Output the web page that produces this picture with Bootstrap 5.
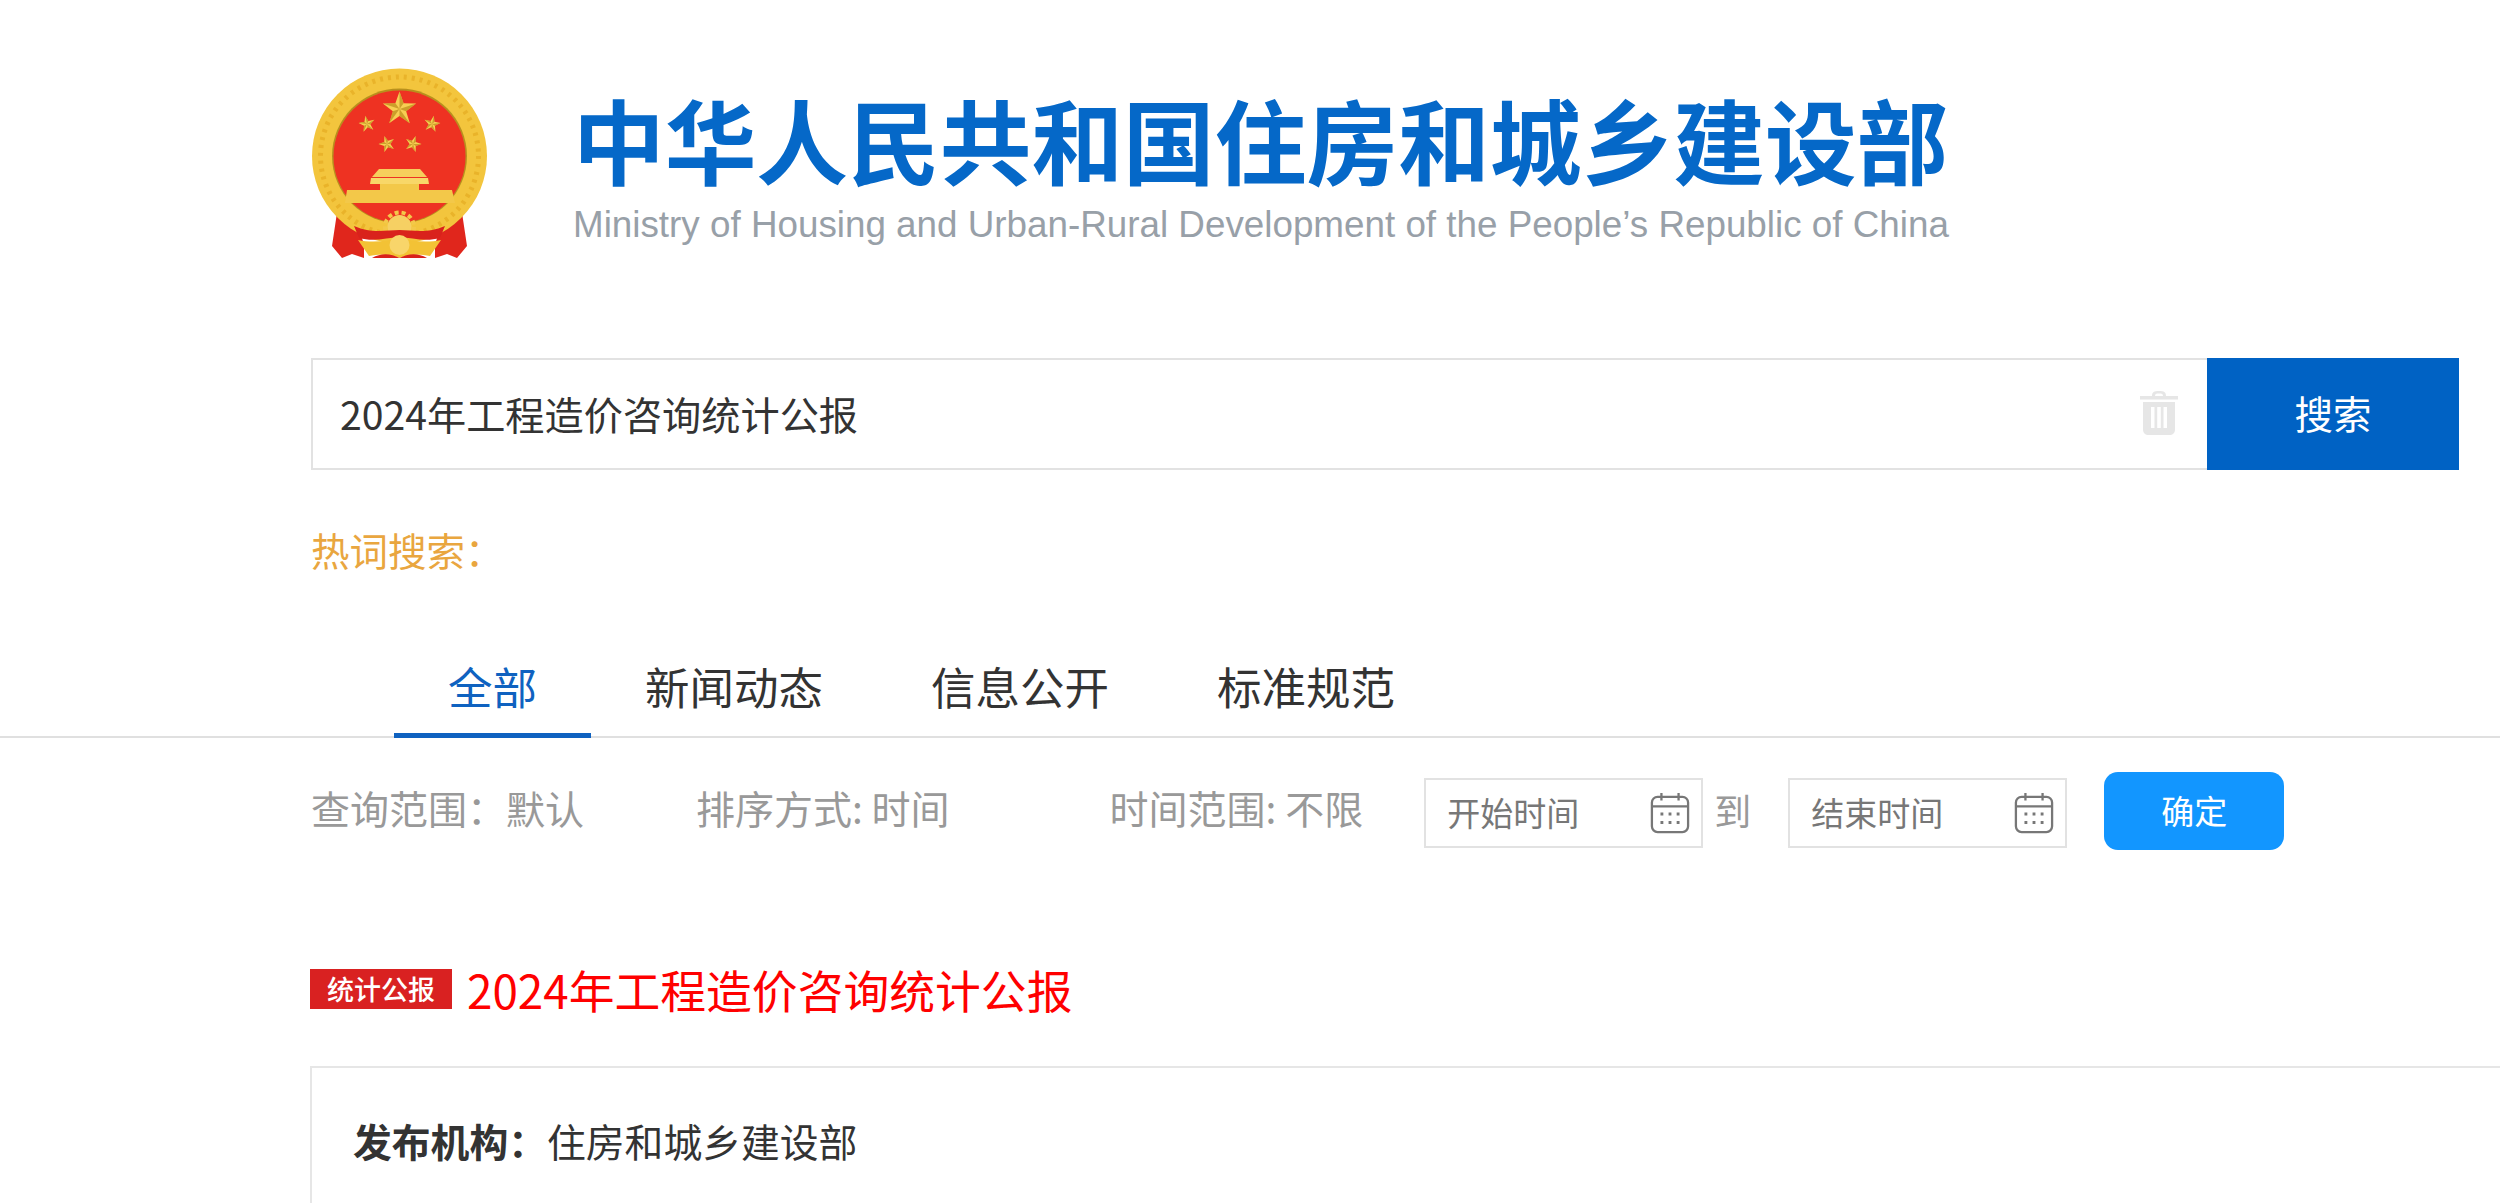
<!DOCTYPE html>
<html lang="zh-CN">
<head>
  <meta charset="UTF-8" />
  <meta name="viewport" content="width=device-width, initial-scale=1" />
  <title>中华人民共和国住房和城乡建设部</title>
  <link href="https://cdn.jsdelivr.net/npm/bootstrap@5.3.0/dist/css/bootstrap.min.css" rel="stylesheet" />
  <style>
    html, body { height: 100%; overflow: hidden; }
    body {
      background: #fff;
      color: #333;
      font-family: "Noto Sans CJK SC", "Liberation Sans", sans-serif;
      font-size: 38.5px;
    }
    .site-head { padding: 68px 0 0 312px; height: 358px; }
    .emblem { width: 176px; height: 192px; flex-shrink: 0; }
    .brand { margin: 17px 0 0 85px; }
    .brand-cn { font-size: 91.7px; font-weight: 700; line-height: 106px; color: #0568c8; white-space: nowrap; }
    .brand-en { font-family: "Liberation Sans", sans-serif; font-size: 36.8px; line-height: 40px; margin-top: 14px; color: #98a0a8; white-space: nowrap; }

    .search-wrap { margin-left: 311px; width: 2148px; height: 112px; }
    .search-field { border: 2px solid #e2e2e2; border-right: 0; background: #fff; }
    .search-input { border: 0; border-radius: 0; font-size: 39.2px; color: #333; padding: 0 0 3px 27px; height: 100%; box-shadow: none !important; }
    .trash { width: 42px; height: 46px; margin-right: 27px; margin-bottom: 3px; flex-shrink: 0; }
    .search-btn { width: 252px; border: 0; border-radius: 0; background: #0062c4; color: #fff; font-size: 38.5px; padding: 0 0 2px; }

    .hot-words { margin: 51px 0 0 311px; color: #e9a63f; line-height: 56px; height: 56px; }

    .tab-bar { margin-top: 69px; padding-left: 394px; height: 92px; border-bottom: 2px solid #e0e0e0; }
    .tab-item { color: #333; font-size: 44.5px; padding: 0 54px; height: 92px; line-height: 80px; text-decoration: none; }
    .tab-item.is-active { color: #0f62c0; border-bottom: 5px solid #0f62c0; }

    .filter-row { margin: 33px 0 0 311px; height: 80px; color: #999; }
    .filter-text { font-size: 39px; line-height: 56px; white-space: nowrap; margin-bottom: 9px; }
    .gap-a { margin-right: 112px; }
    .gap-b { margin-right: 160px; }
    .gap-c { margin-right: 61px; }
    .date-box { width: 279px; height: 70px; border: 2px solid #e2e2e2; padding: 0 11px 0 21px; margin-top: 4px; }
    .date-input { border: 0; padding: 0; font-size: 33px; color: #666; width: 190px; outline: 0; background: transparent; }
    .date-input::placeholder { color: #777; opacity: 1; }
    .cal-icon { width: 40px; height: 42px; flex-shrink: 0; }
    .date-to { width: 85px; padding-left: 11px; font-size: 37px; line-height: 56px; margin-bottom: 2px; }
    .ok-btn { width: 180px; height: 78px; margin-left: 37px; background: #1296ff; color: #fff; border: 0; border-radius: 14px; font-size: 33px; padding: 0; }

    .result-title { margin: 106px 0 0 310px; height: 64px; }
    .type-tag { background: #d92121; color: #fff; font-size: 27px; line-height: 40px; width: 142px; text-align: center; border-radius: 0; padding: 0; font-weight: 500; }
    .result-link { color: #f00; font-size: 45.8px; line-height: 64px; margin-left: 15px; text-decoration: none; white-space: nowrap; }
    .result-panel { margin: 45px 0 0 310px; border: 2px solid #e6e6e6; border-right: 0; border-bottom: 0; padding: 44px 41px; height: 300px; border-radius: 0; }
    .meta-line { font-size: 38.8px; line-height: 56px; color: #333; }
    .meta-line b { font-weight: 700; }
  </style>
</head>
<body>

  <!-- 头部 -->
  <div class="site-head d-flex align-items-start">
    <svg class="emblem" viewBox="32 28 176 192" aria-label="国徽">
      <defs>
        <filter id="soft"><feGaussianBlur stdDeviation="0.45" /></filter>
        <g id="star5">
          <polygon points="0,-10 2.35,-3.24 9.51,-3.09 3.8,1.24 5.88,8.09 0,4 -5.88,8.09 -3.8,1.24 -9.51,-3.09 -2.35,-3.24" fill="#f7cf52" />
          <polygon points="0,-10 2.35,-3.24 0,0 9.51,-3.09 3.8,1.24 0,0 5.88,8.09 0,4 0,0 -5.88,8.09 -3.8,1.24 0,0 -9.51,-3.09 -2.35,-3.24 0,0" fill="#b98a1c" opacity=".7" />
        </g>
      </defs>
      <g filter="url(#soft)">
        <!-- 绶带 -->
        <path d="M58 166 L76 182 L84 204 L84 218 L72 214 L62 218 L52 206 Z" fill="#e0261f" />
        <path d="M181 166 L163 182 L155 204 L155 218 L167 214 L177 218 L187 206 Z" fill="#e0261f" />
        <!-- 麦穗环 -->
        <circle cx="119.5" cy="116" r="87.5" fill="#f3c53c" />
        <circle cx="119.5" cy="116" r="79" fill="none" stroke="#e9b32a" stroke-width="5" stroke-dasharray="3 5" />
        <circle cx="119.5" cy="116" r="67.5" fill="#b8901f" />
        <circle cx="119.5" cy="116.5" r="66" fill="#ee3124" />
        <!-- 星 -->
        <use href="#star5" transform="translate(119.5 69) scale(1.75)" />
        <use href="#star5" transform="translate(87 84) scale(.85) rotate(-12)" />
        <use href="#star5" transform="translate(152 84) scale(.85) rotate(12)" />
        <use href="#star5" transform="translate(107 104) scale(.85) rotate(-18)" />
        <use href="#star5" transform="translate(133 104) scale(.85) rotate(18)" />
        <!-- 天安门 -->
        <path d="M99 129 H140 L147 137 H92 Z" fill="#f6cf5b" />
        <path d="M91 138 H148 L149 144 H90 Z" fill="#f8d768" />
        <path d="M100 144 H139 V150 H100 Z" fill="#f3c84a" />
        <path d="M67 150 H172 L175 163 H65 Z" fill="#f3c84a" />
        <!-- 齿轮 -->
        <circle cx="119.5" cy="187" r="12" fill="#f6d064" />
        <circle cx="119.5" cy="187" r="14.5" fill="none" stroke="#f3c84a" stroke-width="4" stroke-dasharray="4 3" />
        <!-- 绶带中段 -->
        <path d="M74 186 C92 194 106 190 119.5 190 C133 190 147 194 165 186 L160 198 C146 202 132 198 119.5 197 C107 198 93 202 79 198 Z" fill="#d9231c" />
        <path d="M78 200 C92 203 108 201 119.5 198 C131 201 147 203 161 200 L150 216 C140 214 128 214 119.5 218 C111 214 99 214 89 216 Z" fill="#f3c236" />
        <path d="M92 218 C102 212 112 214 119.5 218 C127 214 137 212 147 218 Z" fill="#d9231c" />
        <circle cx="119.5" cy="205" r="10" fill="#f8d56a" />
      </g>
    </svg>
    <div class="brand">
      <div class="brand-cn">中华人民共和国住房和城乡建设部</div>
      <div class="brand-en">Ministry of Housing and Urban-Rural Development of the People’s Republic of China</div>
    </div>
  </div>

  <!-- 搜索 -->
  <div class="search-wrap d-flex">
    <div class="search-field d-flex align-items-center flex-grow-1">
      <input class="form-control search-input" type="text" value="2024年工程造价咨询统计公报" />
      <svg class="trash" viewBox="0 0 42 46" fill="#e6e6e6">
        <path d="M14 6 C14 2 16 1 21 1 C26 1 28 2 28 6 H40 V9.5 H2 V6 Z M17 6 H25 C25 4 24 3.5 21 3.5 C18 3.5 17 4 17 6 Z" />
        <path fill-rule="evenodd" d="M5 12 H37 V39 C37 43 35 45 31 45 H11 C7 45 5 43 5 39 Z M13 17 V38 H16.5 V17 Z M19.2 17 V38 H22.8 V17 Z M25.5 17 V38 H29 V17 Z" />
      </svg>
    </div>
    <button class="btn search-btn" type="button">搜索</button>
  </div>

  <div class="hot-words">热词搜索：</div>

  <!-- 分类 -->
  <nav class="tab-bar d-flex">
    <a class="tab-item is-active" href="#">全部</a>
    <a class="tab-item" href="#">新闻动态</a>
    <a class="tab-item" href="#">信息公开</a>
    <a class="tab-item" href="#">标准规范</a>
  </nav>

  <!-- 筛选 -->
  <div class="filter-row d-flex align-items-center">
    <span class="filter-text gap-a">查询范围：默认</span>
    <span class="filter-text gap-b">排序方式: 时间</span>
    <span class="filter-text gap-c">时间范围: 不限</span>
    <div class="date-box d-flex align-items-center justify-content-between">
      <input class="date-input" type="text" placeholder="开始时间" />
      <svg class="cal-icon" viewBox="0 0 42 44" fill="none" stroke="#777" stroke-width="2.4">
        <rect x="2" y="5" width="38" height="37" rx="6" />
        <path d="M2 15 H40 M12 1 V9 M30 1 V9" />
        <path d="M11 23 H14 M19.5 23 H22.5 M28 23 H31 M11 32 H14 M19.5 32 H22.5 M28 32 H31" stroke-width="3" />
      </svg>
    </div>
    <span class="date-to">到</span>
    <div class="date-box d-flex align-items-center justify-content-between">
      <input class="date-input" type="text" placeholder="结束时间" />
      <svg class="cal-icon" viewBox="0 0 42 44" fill="none" stroke="#777" stroke-width="2.4">
        <rect x="2" y="5" width="38" height="37" rx="6" />
        <path d="M2 15 H40 M12 1 V9 M30 1 V9" />
        <path d="M11 23 H14 M19.5 23 H22.5 M28 23 H31 M11 32 H14 M19.5 32 H22.5 M28 32 H31" stroke-width="3" />
      </svg>
    </div>
    <button class="btn ok-btn" type="button">确定</button>
  </div>

  <!-- 结果 -->
  <div class="result-title d-flex align-items-center">
    <span class="badge type-tag">统计公报</span>
    <a class="result-link" href="#">2024年工程造价咨询统计公报</a>
  </div>
  <div class="card result-panel">
    <div class="meta-line"><b>发布机构：</b>住房和城乡建设部</div>
  </div>

  <script src="https://cdn.jsdelivr.net/npm/bootstrap@5.3.0/dist/js/bootstrap.bundle.min.js"></script>
</body>
</html>
